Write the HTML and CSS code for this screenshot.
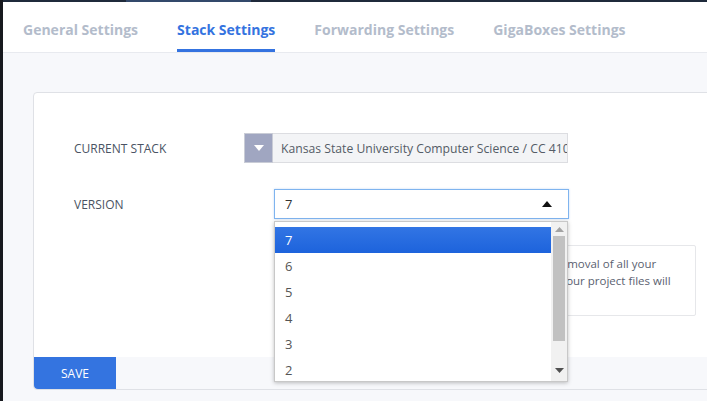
FILE: index.html
```html
<!DOCTYPE html>
<html>
<head>
<meta charset="utf-8">
<link rel="stylesheet" href="styles.css">
</head>
<body>
<div class="app">
  <div class="edge"></div>
  <div class="main">
    <div class="topbar"><div class="topbar-seg"></div></div>
    <nav class="tabs">
      <div class="tab">General Settings</div>
      <div class="tab active">Stack Settings</div>
      <div class="tab">Forwarding Settings</div>
      <div class="tab">GigaBoxes Settings</div>
    </nav>
    <div class="content">
      <div class="card">
        <div class="card-body">
          <div class="row">
            <div class="label">CURRENT STACK</div>
            <div class="input-group">
              <div class="addon"><svg width="12" height="8" viewBox="0 0 12 8"><path d="M1 1 L11 1 L6 7 Z" fill="#fff"/></svg></div>
              <div class="stack-input">Kansas State University Computer Science / CC 410 Java</div>
            </div>
          </div>
          <div class="row">
            <div class="label">VERSION</div>
            <div class="select-wrap">
              <div class="select">
                <span>7</span>
                <svg class="caret" width="10" height="6" viewBox="0 0 10 6"><path d="M0 6 L5 0 L10 6 Z" fill="#111"/></svg>
              </div>
              <div class="listbox">
                <div class="options">
                  <div class="option selected">7</div>
                  <div class="option">6</div>
                  <div class="option">5</div>
                  <div class="option">4</div>
                  <div class="option">3</div>
                  <div class="option">2</div>
                </div>
                <div class="scrollbar">
                  <svg class="sb-up" width="9" height="5" viewBox="0 0 9 5"><path d="M0 5 L4.5 0 L9 5 Z" fill="#a3a3a3"/></svg>
                  <div class="sb-track"><div class="sb-thumb"></div></div>
                  <svg class="sb-down" width="9" height="5" viewBox="0 0 9 5"><path d="M0 0 L4.5 5 L9 0 Z" fill="#505050"/></svg>
                </div>
              </div>
            </div>
          </div>
          <div class="row">
            <div class="label"></div>
            <div class="notice">
              <p>Changing the stack version will result in the entire removal of all your</p>
              <p>installed packages and any other system changes.&nbsp; Your project files will</p>
              <p>not be affected.</p>
            </div>
          </div>
        </div>
        <div class="card-footer">
          <button class="save">SAVE</button>
        </div>
      </div>
    </div>
  </div>
</div>
</body>
</html>
```

FILE: styles.css
```css
* { box-sizing: border-box; }
html, body { margin: 0; padding: 0; height: 100%; overflow: hidden; }
body { font-family: "Open Sans", "Liberation Sans", sans-serif; background: #f7f8fb; }

.app { display: flex; height: 100%; }
.edge { width: 3px; flex: none; background: #17191e; }
.main { flex: 1; min-width: 0; display: flex; flex-direction: column; }

.topbar { height: 2px; background: #1f2a3b; display: flex; }
.topbar-seg { margin-left: 123px; width: 125px; background: #33496b; }

.tabs { height: 51px; background: #fff; border-bottom: 1px solid #e8eaef; display: flex; gap: 39px; padding-left: 20px; }
.tab { display: flex; align-items: center; padding-top: 8px; font-size: 14px; font-weight: 700; color: #b3bccb; border-bottom: 3px solid transparent; }
.tab.active { color: #3473e0; border-bottom-color: #3473e0; }

.content { flex: 1; padding: 39px 0 0 30px; }
.card { width: 720px; background: #fff; border: 1px solid #dfe1e6; border-radius: 4px; display: flex; flex-direction: column; }
.card-body { padding: 40px 0 41px 40px; display: flex; flex-direction: column; gap: 26px; }
.row { display: flex; align-items: center; }
.label { width: 200px; flex: none; font-size: 12px; color: #4a5363; }

.input-group { display: flex; margin-left: -30px; height: 30px; }
.addon { width: 29px; background: #a0a6c1; border: 1px solid #c9ccd6; display: flex; align-items: center; justify-content: center; }
.stack-input { width: 295px; background: #f3f4f6; border: 1px solid #dcdde1; border-left: none; padding: 0 8px; font-size: 12.2px; color: #555c66; display: flex; align-items: center; white-space: nowrap; overflow: hidden; }

.select-wrap { position: relative; }
.select { width: 295px; height: 30px; border: 1px solid #7fb4ef; box-shadow: 0 0 2px rgba(82,150,230,.35); display: flex; align-items: center; justify-content: space-between; padding: 0 16px 0 10px; font-size: 13px; color: #333; }

.listbox { position: absolute; top: 32px; left: 0; width: 294px; height: 161px; background: #fff; border: 1px solid #c8c8c8; box-shadow: 0 1px 4px rgba(0,0,0,.25); display: flex; z-index: 5; }
.options { flex: 1; padding-top: 5px; }
.option { height: 26px; display: flex; align-items: center; padding-left: 10px; font-size: 13px; color: #555; }
.option.selected { background: linear-gradient(#3275e4, #1d63dc); color: #fff; }
.scrollbar { width: 16px; background: #f1f1f1; display: flex; flex-direction: column; align-items: center; }
.sb-up { margin-top: 5px; }
.sb-track { flex: 1; width: 100%; padding: 4px 2px 0 2px; }
.sb-thumb { height: 105px; background: #c1c1c1; }
.sb-down { margin-bottom: 8px; }

.notice { width: 422px; border: 1px solid #e6e7ea; border-radius: 2px; padding: 9px 12px 9px; font-size: 11.5px; line-height: 17px; color: #5a6170; white-space: nowrap; overflow: hidden; }
.notice p { margin: 0; }

.card-footer { background: #f7f8fb; height: 32px; display: flex; border-radius: 0 0 4px 4px; }
.save { width: 82px; height: 32px; border: none; background: #3474e0; color: #fff; font-family: inherit; font-size: 12px; border-radius: 0 0 0 4px; padding: 0; }
```
